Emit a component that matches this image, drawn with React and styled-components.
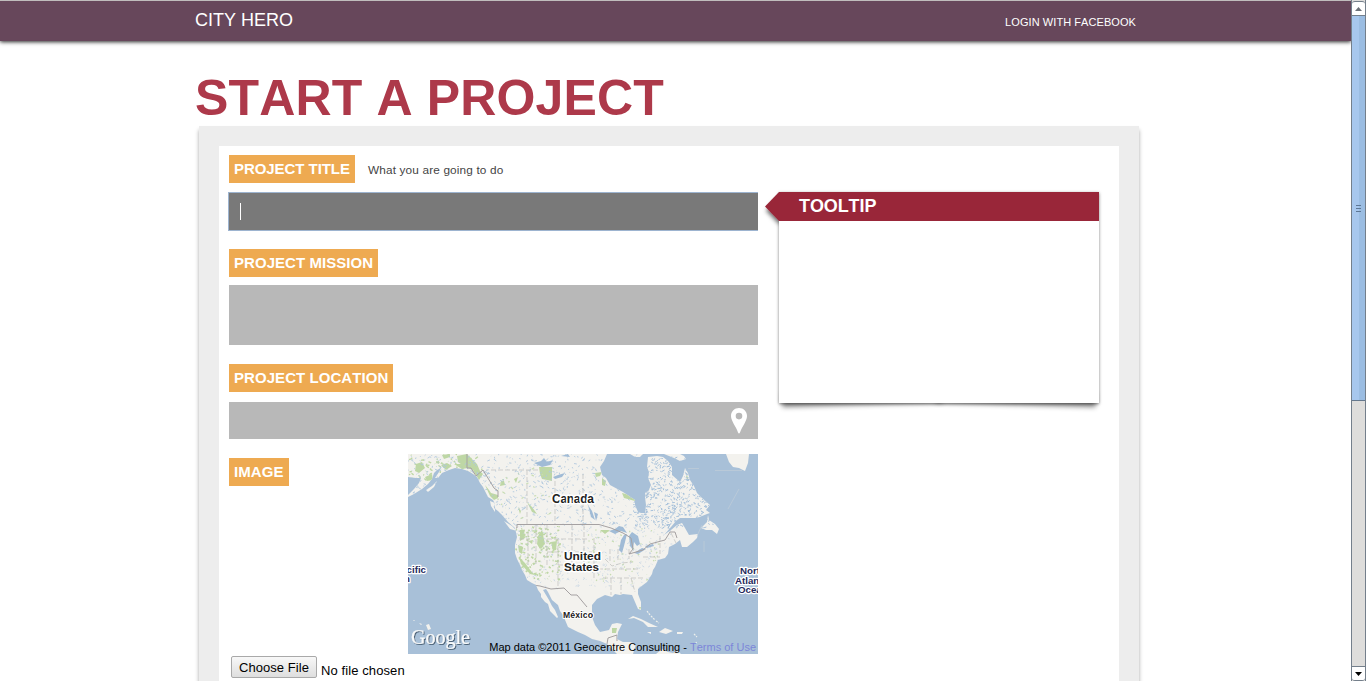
import React from "react";
import styled, { createGlobalStyle, css } from "styled-components";

const GlobalStyle = createGlobalStyle`
  * { box-sizing: border-box; }
  html, body { margin: 0; background: #fff; overflow: hidden; }
  body {
    font-family: "Liberation Sans", Arial, sans-serif;
    font-kerning: none;
    color: #444;
  }
`;

const Window = styled.div`
  display: flex;
  width: 1366px;
  height: 681px;
  overflow: hidden;
`;

const Page = styled.div`
  flex: 1;
  min-width: 0;
  height: 681px;
  overflow: hidden;
`;

const TopBar = styled.header`
  height: 41px;
  border-top: 1px solid #c0bdbd;
  background: #67475b;
  box-shadow: 0 1px 4px rgba(0, 0, 0, 0.85);
  color: #fff;
`;

const TopBarInner = styled.div`
  display: flex;
  justify-content: space-between;
  width: 941px;
  margin-left: 195px;
`;

const Brand = styled.a`
  font-size: 18px;
  line-height: 39px;
`;

const Login = styled.a`
  font-size: 11px;
  line-height: 42px;
  letter-spacing: 0.07px;
`;

const Heading = styled.h1`
  margin: 28px 0 0 195px;
  height: 57px;
  color: #ad394a;
  font-size: 50px;
  line-height: 59px;
  font-weight: bold;
  letter-spacing: 0.15px;
  white-space: nowrap;
`;

const Panel = styled.main`
  display: flex;
  gap: 21px;
  align-items: flex-start;
  width: 940px;
  height: 620px;
  margin-left: 199px;
  padding: 9px 20px 0 10px;
  border: 20px solid #ededed;
  background: #fff;
  box-shadow: 0 4px 4px rgba(0, 0, 0, 0.35);
`;

const Form = styled.form`
  width: 529px;
`;

const LabelRow = styled.div`
  display: flex;
  align-items: center;
  height: 28px;
  margin-bottom: ${(p) => p.$gap}px;
`;

const Label = styled.label`
  height: 28px;
  width: ${(p) => p.$width}px;
  padding-left: 5px;
  background: #eeaa51;
  color: #fff;
  font-size: 15px;
  font-weight: bold;
  line-height: 28px;
  letter-spacing: ${(p) => p.$tracking || 0}px;
  white-space: nowrap;
`;

const Hint = styled.span`
  margin: 2px 0 0 13px;
  font-size: 11.8px;
  letter-spacing: 0.15px;
`;

const Field = styled.div`
  display: flex;
  align-items: center;
  height: ${(p) => p.$height}px;
  margin-bottom: ${(p) => p.$after}px;
  padding: 0 11px;
  background: #b8b8b8;
  ${(p) =>
    p.$active &&
    css`
      background: #797979;
      box-shadow: 0 0 0 1px #9db4d0;
      clip-path: inset(-1px 0 -1px -1px);
    `}
`;

const Caret = styled.span`
  width: 1px;
  height: 17px;
  background: #fff;
`;

const Pin = styled.svg`
  margin-left: auto;
`;

const ImageRow = styled.div`
  display: flex;
  justify-content: space-between;
  align-items: flex-start;
  height: 200px;
  & > ${Label} { margin-top: 4px; }
`;

const MapFrame = styled.div`
  position: relative;
  width: 350px;
  height: 200px;
  overflow: hidden;
  & > svg { display: block; }
`;

const Attribution = styled.div`
  position: absolute;
  right: 2px;
  bottom: 0;
  color: #000;
  font-size: 11px;
  line-height: 14px;
  white-space: nowrap;
  a { color: #7c86d8; }
`;

const FileRow = styled.div`
  display: flex;
  align-items: center;
  gap: 4px;
  margin: 2px 0 0 2px;
  color: #000;
  font-size: 13px;
  & > span { padding-top: 7px; letter-spacing: 0.1px; }
`;

const FileButton = styled.button`
  width: 86px;
  height: 22px;
  padding: 0;
  border: 1px solid #a9a9a9;
  border-radius: 2px;
  background: linear-gradient(#f8f8f8, #dedede);
  color: #000;
  font: 13px "Liberation Sans", Arial, sans-serif;
  letter-spacing: 0.05px;
`;

const Tooltip = styled.aside`
  position: relative;
  z-index: 0;
  width: 320px;
  height: 212px;
  margin-top: 37px;
  &::before,
  &::after {
    content: "";
    position: absolute;
    z-index: -2;
    bottom: 9px;
    width: 160px;
    height: 14px;
    box-shadow: 0 10px 5px rgba(0, 0, 0, 0.45);
  }
  &::before { left: 3px; transform: rotate(-1.7deg); }
  &::after { right: 3px; transform: rotate(1.7deg); }
`;

const TooltipBody = styled.div`
  height: 211px;
  background: #fff;
  box-shadow: 0 1px 3px rgba(0, 0, 0, 0.5);
`;

const TooltipTitle = styled.h2`
  margin: 0;
  height: 29px;
  padding-left: 20px;
  background: #992639;
  color: #fff;
  font-size: 18px;
  line-height: 29px;
  letter-spacing: -0.1px;
`;

const TooltipArrow = styled.svg`
  position: absolute;
  left: -18px;
  top: 0;
`;

const ScrollBar = styled.div`
  display: flex;
  flex-direction: column;
  width: 15px;
  height: 681px;
  padding-top: 1px;
  background: #dedddb;
  border: solid #747f8b;
  border-width: 0 1px;
`;

const ScrollButton = styled.div`
  display: flex;
  align-items: center;
  justify-content: center;
  height: 15px;
  flex: none;
  background: #fff;
  border: 1px solid #747f8b;
  border-width: 1px 0;
  border-radius: ${(p) => (p.$end ? "0 0 3px 3px" : "3px 3px 0 0")};
`;

const ScrollThumb = styled.div`
  display: flex;
  flex-direction: column;
  align-items: center;
  justify-content: center;
  gap: 2px;
  height: 385px;
  border-bottom: 1px solid #65788d;
  background: linear-gradient(90deg, #a7c7ed 0 54%, #9bbde2 54%);
`;

const Grip = styled.i`
  width: 5px;
  height: 1px;
  background: #5d7795;
`;

const ScrollTrack = styled.div`
  flex: 1;
`;

const LAND =
  "M0 0L0 23L8 24L13 24L11 29L6 35L0 41L0 43L6 40L14 35L20 30L24 25L26 19L29 16L33 14L31 18L27 24L30 24L34 19L41 16L47 14L54 15L60 17L65 20L69 23L72 29L75 33L78 39L80 43L85 46L87 50L86 54L90 57L94 61L100 68L107 74L109 83L107 91L107 99L109 105L112 111L114 116L117 121L119 126L124 129L128 131L130 136L133 140L133 143L137 148L140 150L142 157L146 161L149 164L150 163L147 156L144 152L141 146L138 141L135 136L138 135L140 138L144 146L150 151L152 157L155 161L160 173L170 178L177 181L184 185L192 187L199 190L205 196L209 200L225 200L228 190L222 188L215 188L209 185L210 178L214 170L209 169L204 170L201 176L192 178L187 171L184 163L184 151L189 145L197 141L204 143L207 140L212 141L215 140L224 141L227 148L230 155L233 156L233 148L230 140L230 135L235 131L239 128L244 120L245 116L247 113L250 106L257 104L260 100L261 93L267 90L272 86L274 93L279 93L285 88L289 84L290 80L281 81L277 74L274 69L269 71L263 76L256 81L263 73L268 67L272 64L283 64L289 64L299 60L302 59L298 56L302 51L294 44L289 39L286 32L282 26L280 19L277 14L275 22L272 28L264 21L264 13L260 7L255 3L249 2L240 3L239 13L241 18L240 24L243 31L240 38L237 43L238 51L237 59L233 59L230 58L227 51L227 46L215 38L202 31L198 24L194 21L192 13L196 7L199 0Z" +
  "M300 61L299 68L293 74L298 76L304 76L309 80L311 75L307 70L304 68L301 66Z" +
  "M318 0L321 8L325 13L331 14L337 17L340 9L341 0Z" +
  "M222 0L227 3L232 3L235 0ZM256 0L266 4L272 7L278 5L276 2L272 0Z" +
  "M18 36L24 32L29 27L26 33L20 38ZM82 47L87 49L87 58L83 52ZM96 67L104 72L109 77L102 75Z" +
  "M220 165L225 162L233 165L241 169L250 173L240 173L235 168L226 164Z" +
  "M251 178L257 174L265 177L258 180ZM239 178L243 178L243 180ZM269 178L275 178L274 180L269 180ZM237 39l3-2l1 3l-3 3z" +
  "M18 171l3-1l2 5l-3 1zM11 169l3 1l-1 1zM5 166l2 0l-1 1zM248 200L254 195L260 198L265 199L270 197L273 200Z";

const LAKES =
  "M126 9L133 7L136 4L139 8L145 6L142 11L134 13ZM145 23L150 21L157 19L154 23L147 25ZM153 2l7-2l2 3z" +
  "M201 77L207 75L211 72L215 73L219 79L213 77L207 80ZM213 86L216 81L219 80L216 92L214 99L211 96Z" +
  "M221 82L224 78L230 82L232 90L229 92L226 88L225 96L222 92ZM226 99L234 94L238 95L230 100ZM237 92L245 90L246 92L239 94Z" +
  "M180 51L184 57L187 66L183 63ZM186 58L190 60L188 67ZM276 66l9 1l-3 2z";

const PARKS =
  "M8 10L14 8L17 14L11 19L7 17ZM17 23L24 20L25 26L19 27ZM33 11L39 9L44 12L38 16ZM34 1L42 0L42 3L36 5ZM46 10L58 10L60 14L54 15ZM49 2L59 0L69 10L72 17L75 20L71 26L65 16L57 13L50 8Z" +
  "M77 31L81 36L83 39L90 41L90 44L86 46L82 42ZM131 13L144 13L144 27L134 25L132 20ZM194 24L198 27L197 32L194 31ZM214 39L226 42L227 47L216 44ZM93 27L96 27L97 31L92 32ZM106 25L110 23L108 29ZM119 48L124 53L129 60L124 58ZM110 53L113 57L112 60Z" +
  "M112 76L116 76L117 84L112 87ZM130 82L134 76L137 90L132 95L129 90ZM143 88L149 87L148 96L145 97ZM120 87L125 86L124 90ZM110 91L115 93L114 100L111 98ZM111 103L117 109L123 117L127 121L122 120L113 110Z" +
  "M204 174L209 174L208 179L204 179ZM231 153l2 0l-1 3zM187 19l7-1l-2 4l-4 1zM192 76L202 76L197 80ZM279 21l2 6l-3-4z";

// Deterministic short strokes for the small rivers, lakes and forests.
function makeMarks(seed, count, area, size) {
  let state = seed;
  const next = () => {
    state = (state * 16807) % 2147483647;
    return state / 2147483647;
  };
  let d = "";
  for (let i = 0; i < count; i++) {
    const x = area[0] + next() * area[2];
    const y = area[1] + next() * area[3];
    const dx = (next() - 0.3) * size;
    const dy = (next() - 0.5) * size;
    d += `M${x.toFixed(1)} ${y.toFixed(1)}l${dx.toFixed(1)} ${dy.toFixed(1)}`;
  }
  return d;
}

const northWater = makeMarks(7193, 820, [0, 0, 240, 72], 4);
const eastWater = makeMarks(91327, 780, [225, 3, 80, 72], 3.8);
const southWater = makeMarks(36711, 420, [108, 72, 155, 62], 3);
const westWoods = makeMarks(55519, 150, [108, 72, 45, 55], 4);
const eastWoods = makeMarks(22207, 80, [180, 75, 70, 55], 3);
const alaskaWoods = makeMarks(64109, 60, [0, 0, 75, 25], 4);
const rockiesWoods = makeMarks(8117, 30, [90, 15, 60, 50], 4);

function NorthAmericaMap() {
  return (
    <svg width="350" height="200" viewBox="0 0 350 200">
      <defs>
        <clipPath id="land"><path d={LAND} /></clipPath>
        <filter id="logoShadow" x="-20%" y="-20%" width="150%" height="150%">
          <feDropShadow dx="1" dy="1" stdDeviation="0.7" floodColor="#34495f" floodOpacity="0.8" />
        </filter>
      </defs>
      <rect width="350" height="200" fill="#a8c0d8" />
      <path d={LAND} fill="#f3f2ee" />
      <g clipPath="url(#land)" fill="none">
        <path d={PARKS} fill="#bed7a5" />
        <path d={westWoods} stroke="#bed7a5" strokeWidth="1.6" />
        <path d={eastWoods} stroke="#c5dcae" strokeWidth="1.2" />
        <path d={alaskaWoods} stroke="#bed7a5" strokeWidth="1.4" />
        <path d={rockiesWoods} stroke="#c8ddb4" strokeWidth="1.2" />
        <path d={northWater} stroke="#b0c7de" strokeWidth="0.9" />
        <path d={eastWater} stroke="#a6c0da" strokeWidth="1" />
        <path d={southWater} stroke="#bccfe1" strokeWidth="0.7" />
        <path d={LAKES} fill="#a0bbd6" />
        <path
          d="M83 16H130M119 16V70M147 27V70M175 20V70M111 85H121M120 78V112M128 71V110M139 71V112M139 85H180M139 98H184M150 85V132M164 71V111M176 71V115M186 84V124M150 111H190M190 115H230M195 124H236M197 105L204 112L214 109L224 108M202 95V107M210 95V106M221 95V105M203 124V141M213 124V140M223 124L227 138M235 103H252M252 82V100M263 79L269 91"
          stroke="#bebebb" strokeWidth="0.7" strokeDasharray="5 2"
        />
        <path
          d="M59 0V14H63L68 22L75 16L86 34L90 37V43M108 74H109V70.500H191L203 74L215 79L223 84L225 95L221 100L228 98L235 96L242 90L257 86L262 78L267 78L269 84M125 131L132 132L143 135L156 134L163 141L169 141L179 153M199 190L200 184L209 181V187"
          stroke="#a5a1a2" strokeWidth="1"
        />
      </g>
      <g fill="none" stroke="#c0cdd8" strokeWidth="0.7">
        <path d="M280 14.500H291M307 16.500H334M331 35L320 55M294 71L289 82M296 87V98" />
        <path d="M239 157l3 4M243 162l4 4M248 167l3 2M286 180l3 3M288 188l1 3" stroke="#eef0ec" strokeWidth="1.2" strokeDasharray="2 1" />
      </g>
      <g
        fontFamily="Liberation Sans, Arial, sans-serif" fontWeight="bold" fill="#222"
        stroke="#fff" strokeWidth="3" strokeLinejoin="round" paintOrder="stroke"
      >
        <text x="144" y="49" fontSize="12" textLength="42">Canada</text>
        <text x="156" y="106" fontSize="11.5" textLength="37" lengthAdjust="spacingAndGlyphs">United</text>
        <text x="156" y="117" fontSize="11.5" textLength="35" lengthAdjust="spacingAndGlyphs">States</text>
        <text x="155" y="164" fontSize="8.8" textLength="30" strokeWidth="2">México</text>
        <g fill="#24285b" fontSize="9.7" strokeWidth="2.5">
          <text x="18" y="119" textAnchor="end">Pacific</text>
          <text x="2" y="128" textAnchor="end">Ocean</text>
          <text x="332" y="120">North</text>
          <text x="327" y="130">Atlantic</text>
          <text x="330" y="139">Ocean</text>
        </g>
      </g>
      <text
        x="3" y="190" fontFamily="Liberation Serif, Times New Roman, serif" fontSize="22"
        textLength="59" lengthAdjust="spacingAndGlyphs" fill="#f8fafb" stroke="#f8fafb" strokeWidth="0.2" filter="url(#logoShadow)"
      >Google</text>
    </svg>
  );
}

export default function App() {
  return (
    <>
      <GlobalStyle />
      <Window>
        <Page>
          <TopBar>
            <TopBarInner>
              <Brand>CITY HERO</Brand>
              <Login>LOGIN WITH FACEBOOK</Login>
            </TopBarInner>
          </TopBar>
          <Heading>START A PROJECT</Heading>
          <Panel>
            <Form>
              <LabelRow $gap={10}>
                <Label $width={126} $tracking={-0.06}>PROJECT TITLE</Label>
                <Hint>What you are going to do</Hint>
              </LabelRow>
              <Field $height={37} $after={19} $active><Caret /></Field>
              <LabelRow $gap={8}>
                <Label $width={149} $tracking={0.05}>PROJECT MISSION</Label>
              </LabelRow>
              <Field $height={60} $after={19} />
              <LabelRow $gap={10}>
                <Label $width={164} $tracking={0.06}>PROJECT LOCATION</Label>
              </LabelRow>
              <Field $height={37} $after={15}>
                <Pin width="16" height="26" viewBox="0 0 16 26">
                  <path fill="#fff" fillRule="evenodd" d="M8 0C3.500 0 0 3.500 0 8c0 5 5 10.500 7 16.500Q8 26.500 9 24.500C11 18.500 16 13 16 8c0-4.500-3.500-8-8-8zm0 4.800a3.300 3.300 0 1 1 0 6.600A3.300 3.300 0 0 1 8 4.800z" />
                </Pin>
              </Field>
              <ImageRow>
                <Label $width={60} $tracking={0.1}>IMAGE</Label>
                <MapFrame>
                  <NorthAmericaMap />
                  <Attribution>Map data ©2011 Geocentre Consulting - <a>Terms of Use</a></Attribution>
                </MapFrame>
              </ImageRow>
              <FileRow>
                <FileButton type="button">Choose File</FileButton>
                <span>No file chosen</span>
              </FileRow>
            </Form>
            <Tooltip>
              <TooltipBody>
                <TooltipTitle>TOOLTIP</TooltipTitle>
              </TooltipBody>
              <TooltipArrow width="18" height="38" viewBox="0 0 18 38">
                <defs>
                  <filter id="arrowShadow" x="-50%" y="-50%" width="200%" height="200%">
                    <feDropShadow dx="1" dy="4" stdDeviation="2" floodOpacity="0.6" />
                  </filter>
                </defs>
                <path d="M18 0L4 14.500L18 29Z" fill="#992639" filter="url(#arrowShadow)" />
              </TooltipArrow>
            </Tooltip>
          </Panel>
        </Page>
        <ScrollBar>
          <ScrollButton>
            <svg width="7" height="4" viewBox="0 0 7 4"><path d="M0 4L3.500 0L7 4Z" fill="#6b7077" /></svg>
          </ScrollButton>
          <ScrollThumb><Grip /><Grip /><Grip /></ScrollThumb>
          <ScrollTrack />
          <ScrollButton $end>
            <svg width="7" height="4" viewBox="0 0 7 4"><path d="M0 0H7L3.500 4Z" fill="#000" /></svg>
          </ScrollButton>
        </ScrollBar>
      </Window>
    </>
  );
}
